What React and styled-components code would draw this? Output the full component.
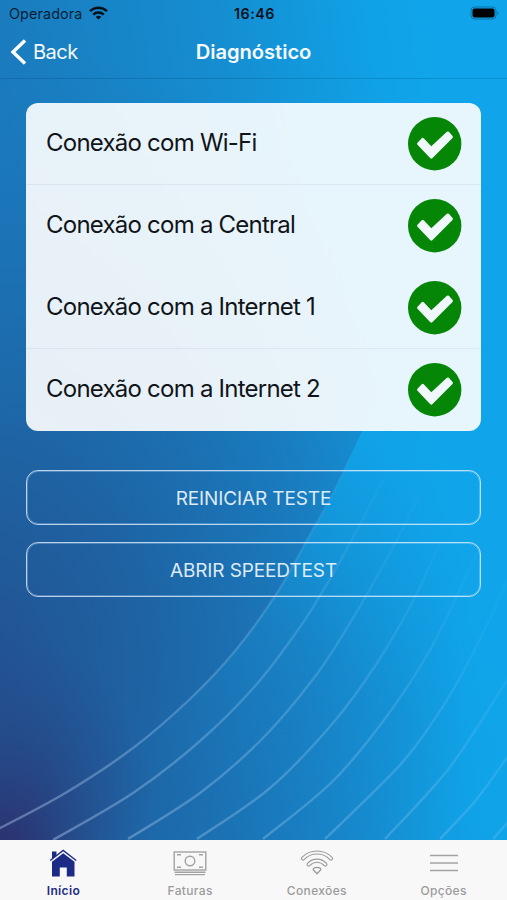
import React from "react";
import styled, { createGlobalStyle } from "styled-components";

const GlobalStyle = createGlobalStyle`
  * {
    box-sizing: border-box;
  }
  body {
    margin: 0;
    font-family: Inter, "Liberation Sans", sans-serif;
  }
`;

const Screen = styled.div`
  display: grid;
  grid-template: 900px / 507px;
  overflow: hidden;
  background: #10a5ea;
`;

const Wallpaper = styled.svg`
  grid-area: 1 / 1;
  width: 507px;
  height: 900px;
`;

const Layout = styled.div`
  grid-area: 1 / 1;
  display: flex;
  flex-direction: column;
  z-index: 1;
`;

const StatusBar = styled.div`
  display: grid;
  grid-template-columns: 1fr auto 1fr;
  align-items: center;
  height: 26px;
  padding: 0 7px 0 9px;
  font-size: 14.4px;
  color: rgba(0, 10, 20, 0.85);
`;

const Carrier = styled.div`
  display: flex;
  align-items: center;
  gap: 6px;
  letter-spacing: 0.1px;
`;

const Clock = styled.div`
  font-size: 14.3px;
  font-weight: 600;
  letter-spacing: 0.5px;
  color: #03111c;
`;

const Battery = styled.svg`
  justify-self: end;
`;

const NavBar = styled.div`
  display: grid;
  grid-template-columns: 1fr auto 1fr;
  align-items: center;
  height: 53px;
  padding: 0 10px;
  border-bottom: 1px solid rgba(0, 50, 100, 0.2);
  color: #f4faff;
`;

const BackButton = styled.div`
  display: flex;
  align-items: center;
  gap: 6px;
  font-size: 20px;
  letter-spacing: -0.5px;
`;

const Title = styled.h1`
  margin: 0;
  padding-bottom: 2px;
  font-size: 20.2px;
  font-weight: 600;
  letter-spacing: -0.05px;
`;

const Content = styled.div`
  flex: 1;
  padding: 24px 26px 0;
`;

const Card = styled.div`
  height: 328px;
  margin-bottom: 39px;
  border-radius: 12px;
  background: rgba(255, 255, 255, 0.9);
`;

const Row = styled.div`
  display: flex;
  align-items: center;
  justify-content: space-between;
  height: 82px;
  padding: 0 19px 0 20px;
  border-bottom: 1px solid
    ${(props) => (props.$divider ? "rgba(0, 40, 80, 0.06)" : "transparent")};
  font-size: 24px;
  line-height: 28px;
  letter-spacing: -0.77px;
  color: #111418;

  span {
    padding-bottom: 1px;
  }
`;

const OutlineButton = styled.div`
  display: flex;
  align-items: center;
  justify-content: center;
  height: 55px;
  margin-bottom: 17px;
  padding-top: 1px;
  border: 1px solid rgba(225, 240, 255, 0.8);
  box-shadow: inset 0 0 0 1px rgba(215, 235, 255, 0.28);
  border-radius: 12px;
  font-size: 19px;
  letter-spacing: -0.12px;
  color: rgba(240, 248, 255, 0.92);
`;

const TabBar = styled.div`
  display: grid;
  grid-template-columns: repeat(4, 1fr);
  height: 60px;
  background: #f8f8f8;
`;

const Tab = styled.div`
  display: flex;
  flex-direction: column;
  align-items: center;
  padding-top: 9px;
  color: ${(props) => (props.$active ? "#1c2b85" : "#9b9b9b")};
  font-size: 12px;
  font-weight: ${(props) => (props.$active ? 600 : 500)};
  line-height: 16px;
  letter-spacing: 0.35px;

  svg {
    margin-bottom: 6px;
  }
`;

const checks = [
  { label: "Conexão com Wi-Fi", divider: true },
  { label: "Conexão com a Central" },
  { label: "Conexão com a Internet 1", divider: true },
  { label: "Conexão com a Internet 2" },
];

// points each wave passes through, from the bottom left up
const waves = [
  [[-20, 836], [0, 828], [67, 792], [133, 748], [190, 699], [235, 651], [277, 593], [307, 540], [333, 493], [350, 457]],
  [[53, 840], [133, 793], [200, 741], [256, 685], [300, 627], [330, 579], [357, 530], [383, 480]],
  [[128, 839], [200, 793], [262, 739], [314, 678], [350, 623], [375, 580], [399, 536], [420, 493]],
  [[197, 839], [270, 788], [333, 723], [377, 663], [413, 601], [440, 543]],
  [[263, 839], [333, 781], [387, 716], [430, 650], [463, 583], [477, 553]],
  [[325, 839], [400, 765], [440, 711], [470, 659], [500, 597], [509, 575]],
  [[385, 839], [450, 767], [507, 680]],
  [[440, 839], [476, 800], [508, 756]],
  [[493, 839], [508, 822]],
];

function smoothPath(points) {
  let d = `M${points[0]}`;
  for (let i = 0; i < points.length - 1; i++) {
    const p0 = points[i - 1] || points[i];
    const p1 = points[i];
    const p2 = points[i + 1];
    const p3 = points[i + 2] || p2;
    const c1 = [p1[0] + (p2[0] - p0[0]) / 6, p1[1] + (p2[1] - p0[1]) / 6];
    const c2 = [p2[0] - (p3[0] - p1[0]) / 6, p2[1] - (p3[1] - p1[1]) / 6];
    d += `C${c1} ${c2} ${p2}`;
  }
  return d;
}

function Background() {
  return (
    <Wallpaper viewBox="0 0 507 900" aria-hidden="true">
      <defs>
        <linearGradient id="base" gradientUnits="userSpaceOnUse" x1="0" y1="60" x2="440" y2="0">
          <stop offset="0" stopColor="#1a7bbd" />
          <stop offset="0.5" stopColor="#158ed1" />
          <stop offset="0.85" stopColor="#10a2e7" />
          <stop offset="1" stopColor="#10a5ea" />
        </linearGradient>
        <radialGradient
          id="shade"
          gradientUnits="userSpaceOnUse"
          cx="0"
          cy="0"
          r="1"
          gradientTransform="translate(-30 680) rotate(8) scale(500 640)"
        >
          <stop offset="0" stopColor="#234f8f" stopOpacity="1" />
          <stop offset="0.35" stopColor="#1f5f9f" stopOpacity="0.88" />
          <stop offset="0.65" stopColor="#1c6cae" stopOpacity="0.62" />
          <stop offset="0.85" stopColor="#1b74b8" stopOpacity="0.32" />
          <stop offset="1" stopColor="#1b76b8" stopOpacity="0" />
        </radialGradient>
        <radialGradient
          id="corner"
          gradientUnits="userSpaceOnUse"
          cx="0"
          cy="0"
          r="1"
          gradientTransform="translate(0 865) rotate(12) scale(150 230)"
        >
          <stop offset="0" stopColor="#2e2a68" stopOpacity="1" />
          <stop offset="0.3" stopColor="#2b3573" stopOpacity="0.75" />
          <stop offset="1" stopColor="#264a88" stopOpacity="0" />
        </radialGradient>
        <linearGradient id="glow" gradientUnits="userSpaceOnUse" x1="150" y1="790" x2="370" y2="440">
          <stop offset="0" stopColor="#10a5ea" stopOpacity="0" />
          <stop offset="0.5" stopColor="#10a5ea" stopOpacity="0.22" />
          <stop offset="1" stopColor="#10a5ea" stopOpacity="0.85" />
        </linearGradient>
        <linearGradient id="line" gradientUnits="userSpaceOnUse" x1="60" y1="840" x2="400" y2="500">
          <stop offset="0" stopColor="#b4d2f5" stopOpacity="0.4" />
          <stop offset="0.6" stopColor="#a0d0f5" stopOpacity="0.24" />
          <stop offset="1" stopColor="#90d0f8" stopOpacity="0.04" />
        </linearGradient>
      </defs>
      <rect width="507" height="900" fill="url(#base)" />
      <rect width="507" height="900" fill="url(#shade)" />
      <rect width="507" height="900" fill="url(#corner)" />
      <path
        d={`${smoothPath(waves[0])}C380 390 430 310 482 263L507 245V900H-20Z`}
        fill="url(#glow)"
      />
      {waves.map((points, i) => (
        <path key={i} d={smoothPath(points)} fill="none" stroke="url(#line)" strokeWidth="2.4" />
      ))}
    </Wallpaper>
  );
}

function SignalIcon() {
  return (
    <svg width="19" height="14" viewBox="0 0 19 14" fill="none" stroke="#03111c" strokeWidth="2.5">
      <path d="M1 5.2C5.8 0.5 13.2 0.5 18 5.2" />
      <path d="M4.2 8.6C7.2 5.8 11.8 5.8 14.8 8.6" />
      <path d="M9.5 13.5 6.7 10.9Q9.5 8.7 12.3 10.9Z" fill="#03111c" stroke="none" />
    </svg>
  );
}

function CheckIcon() {
  return (
    <svg width="54" height="54" viewBox="0 0 54 54">
      <circle cx="26.7" cy="26.7" r="26.7" fill="#068606" />
      <path
        d="M9.5 27.7Q8.5 26.700 9.500 25.700L13.700 21.200Q14.700 20.300 15.700 21.200L23.300 29.200 38.900 14.800Q39.900 14 40.900 14.800L44.600 18.900Q45.400 19.900 44.500 20.900L24.300 41.300Q23.300 42.200 22.300 41.300Z"
        fill="#f0f8fb"
      />
    </svg>
  );
}

function HomeIcon() {
  return (
    <svg width="28" height="28" viewBox="0 0 28 28">
      <path d="M3 2.5H7.5V6.5L3 10Z" fill="#1c2b85" />
      <path d="M1.2 11.5 14.2 1.5 27.2 11.5" fill="none" stroke="#1c2b85" strokeWidth="1.4" />
      <path d="M3 12.8 14.2 4.2 25.5 12.8V27.5H17.8V18.5H10.8V27.5H3Z" fill="#1c2b85" />
    </svg>
  );
}

function MoneyIcon() {
  return (
    <svg width="34" height="28" viewBox="0 0 34 28" fill="none" stroke="#a2a2a2" strokeWidth="1.4">
      <rect x="1.2" y="3" width="31.6" height="18" />
      <circle cx="17" cy="12" r="4.8" />
      <path d="M4 5.8H8M26 5.8H30M4 18.2H8M26 18.2H30M1.5 23.3H32.5M2 25.6H32" />
    </svg>
  );
}

// each arc is a thick stroke with a thinner one cut out of its middle
function WifiIcon() {
  const arcs = [
    "M3 9.5C10.5 1.5 23.5 1.5 31 9.5",
    "M8.6 15.5C13.4 10.4 20.6 10.4 25.4 15.5",
  ];
  return (
    <svg width="34" height="28" viewBox="0 0 34 28" fill="none" strokeLinecap="round">
      {arcs.map((d) => (
        <g key={d}>
          <path d={d} stroke="#9b9b9b" strokeWidth="4.2" />
          <path d={d} stroke="#f8f8f8" strokeWidth="1.9" />
        </g>
      ))}
      <path
        d="M17 24.8 13.2 20.8Q13.2 18.3 17 18.3T20.8 20.8Z"
        stroke="#9b9b9b"
        strokeWidth="1.3"
        strokeLinejoin="round"
      />
    </svg>
  );
}

function MenuIcon() {
  return (
    <svg width="28" height="28" viewBox="0 0 28 28" stroke="#a2a2a2" strokeWidth="1.5">
      <path d="M0 6.6H28M0 14H28M0 21.4H28" />
    </svg>
  );
}

export default function App() {
  return (
    <>
      <GlobalStyle />
      <Screen>
        <Background />
        <Layout>
          <StatusBar>
            <Carrier>
              <span>Operadora</span>
              <SignalIcon />
            </Carrier>
            <Clock>16:46</Clock>
            <Battery width="30" height="14" viewBox="0 0 30 14">
              <rect x="1" y="1" width="25" height="12" rx="3.5" fill="none" stroke="rgba(0,30,50,0.4)" />
              <rect x="2.5" y="2.5" width="22" height="9" rx="2" fill="#000" />
              <path d="M27.5 5Q29.5 7 27.5 9Z" fill="rgba(0,30,50,0.4)" />
            </Battery>
          </StatusBar>
          <NavBar>
            <BackButton>
              <svg width="17" height="26" viewBox="0 0 17 26" fill="none" stroke="#fff" strokeWidth="3.4">
                <path d="M15 1.5 3 13 15 24.5" />
              </svg>
              <span>Back</span>
            </BackButton>
            <Title>Diagnóstico</Title>
          </NavBar>
          <Content>
            <Card>
              {checks.map((check) => (
                <Row key={check.label} $divider={check.divider}>
                  <span>{check.label}</span>
                  <CheckIcon />
                </Row>
              ))}
            </Card>
            <OutlineButton>REINICIAR TESTE</OutlineButton>
            <OutlineButton>ABRIR SPEEDTEST</OutlineButton>
          </Content>
          <TabBar>
            <Tab $active>
              <HomeIcon />
              Início
            </Tab>
            <Tab>
              <MoneyIcon />
              Faturas
            </Tab>
            <Tab>
              <WifiIcon />
              Conexões
            </Tab>
            <Tab>
              <MenuIcon />
              Opções
            </Tab>
          </TabBar>
        </Layout>
      </Screen>
    </>
  );
}
